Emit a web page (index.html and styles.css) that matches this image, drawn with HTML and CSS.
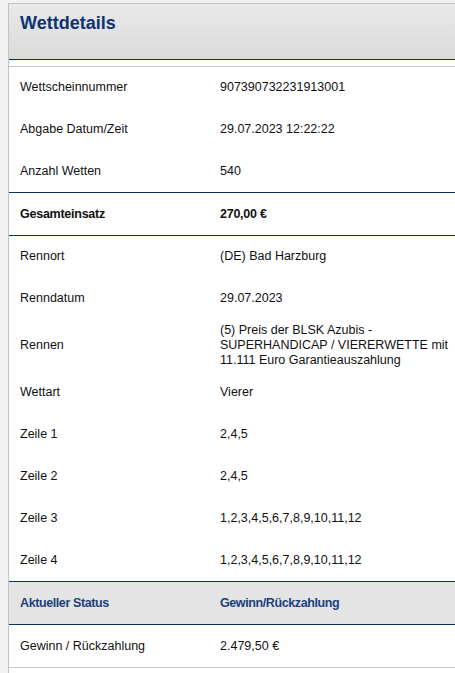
FILE: index.html
```html
<!DOCTYPE html>
<html lang="de">

<head>
  <meta charset="UTF-8">
  <title>Wettdetails</title>

  <link rel="stylesheet" href="styles.css">

</head>

<body>
  <!-- WETTDETAILS BOX -->
  <div class="box">
    <div class="kopf">
      <h1>Wettdetails</h1>
    </div>

    <div class="liste">
      <div class="zeile">
        <div class="name">Wettscheinnummer</div>
        <div class="wert">907390732231913001</div>
      </div>
      <div class="zeile">
        <div class="name">Abgabe Datum/Zeit</div>
        <div class="wert">29.07.2023 12:22:22</div>
      </div>
      <div class="zeile linie">
        <div class="name">Anzahl Wetten</div>
        <div class="wert">540</div>
      </div>
      <div class="zeile summe">
        <div class="name">Gesamteinsatz</div>
        <div class="wert">270,00 €</div>
      </div>
      <div class="zeile">
        <div class="name">Rennort</div>
        <div class="wert">(DE) Bad Harzburg</div>
      </div>
      <div class="zeile">
        <div class="name">Renndatum</div>
        <div class="wert">29.07.2023</div>
      </div>
      <div class="zeile">
        <div class="name">Rennen</div>
        <div class="wert">(5) Preis der BLSK Azubis - SUPERHANDICAP / VIERERWETTE mit 11.111 Euro Garantieauszahlung</div>
      </div>
      <div class="zeile">
        <div class="name">Wettart</div>
        <div class="wert">Vierer</div>
      </div>
      <div class="zeile">
        <div class="name">Zeile 1</div>
        <div class="wert">2,4,5</div>
      </div>
      <div class="zeile">
        <div class="name">Zeile 2</div>
        <div class="wert">2,4,5</div>
      </div>
      <div class="zeile">
        <div class="name">Zeile 3</div>
        <div class="wert">1,2,3,4,5,6,7,8,9,10,11,12</div>
      </div>
      <div class="zeile linie">
        <div class="name">Zeile 4</div>
        <div class="wert">1,2,3,4,5,6,7,8,9,10,11,12</div>
      </div>
      <div class="zeile status">
        <div class="name">Aktueller Status</div>
        <div class="wert">Gewinn/Rückzahlung</div>
      </div>
      <div class="zeile letzte">
        <div class="name">Gewinn / Rückzahlung</div>
        <div class="wert">2.479,50 €</div>
      </div>
    </div>
  </div>
</body>

</html>
```

FILE: styles.css
```css
/* SEITE */
body {
  margin: 3px 0 0 8px;
  background-color: #f2f2f2;
  font-family: "Liberation Sans", Arial, sans-serif;
  font-size: 12.5px;
  color: #111;
}

.box {
  background-color: #fff;
  border-top: 1px solid #c3c3c3;
  border-left: 1px solid #c3c3c3;
  min-height: 700px;
}

/* KOPF */
.kopf {
  height: 55px;
  box-sizing: content-box;
  padding: 0 0 0 11px;
  background: linear-gradient(#e9e9e9, #dadada);
  border-bottom: 1px solid #0c2d69;
}

.kopf h1 {
  margin: 0;
  padding-top: 8px;
  font-size: 18px;
  line-height: 22px;
  font-weight: bold;
  color: #0e3372;
}

/* LISTE */
.liste {
  margin-top: 6px;
  border-top: 1px solid #c8c8c8;
}

.zeile {
  display: grid;
  grid-template-columns: 200px 1fr;
  align-items: center;
  box-sizing: border-box;
  min-height: 42px;
  padding: 3px 0 3px 11px;
  line-height: 15px;
  border-bottom: 1px solid #fff;
}

.zeile.linie {
  border-bottom-color: #0c2d69;
}

.zeile.summe {
  min-height: 43px;
  font-weight: bold;
  letter-spacing: -0.25px;
  border-bottom-color: #0c2d69;
}

.zeile.status {
  min-height: 43px;
  font-weight: bold;
  letter-spacing: -0.4px;
  color: #1c3f7c;
  background-color: #e4e4e4;
  border-bottom-color: #0c2d69;
}

.zeile.letzte {
  min-height: 43px;
  border-bottom-color: #c8c8c8;
}
```
